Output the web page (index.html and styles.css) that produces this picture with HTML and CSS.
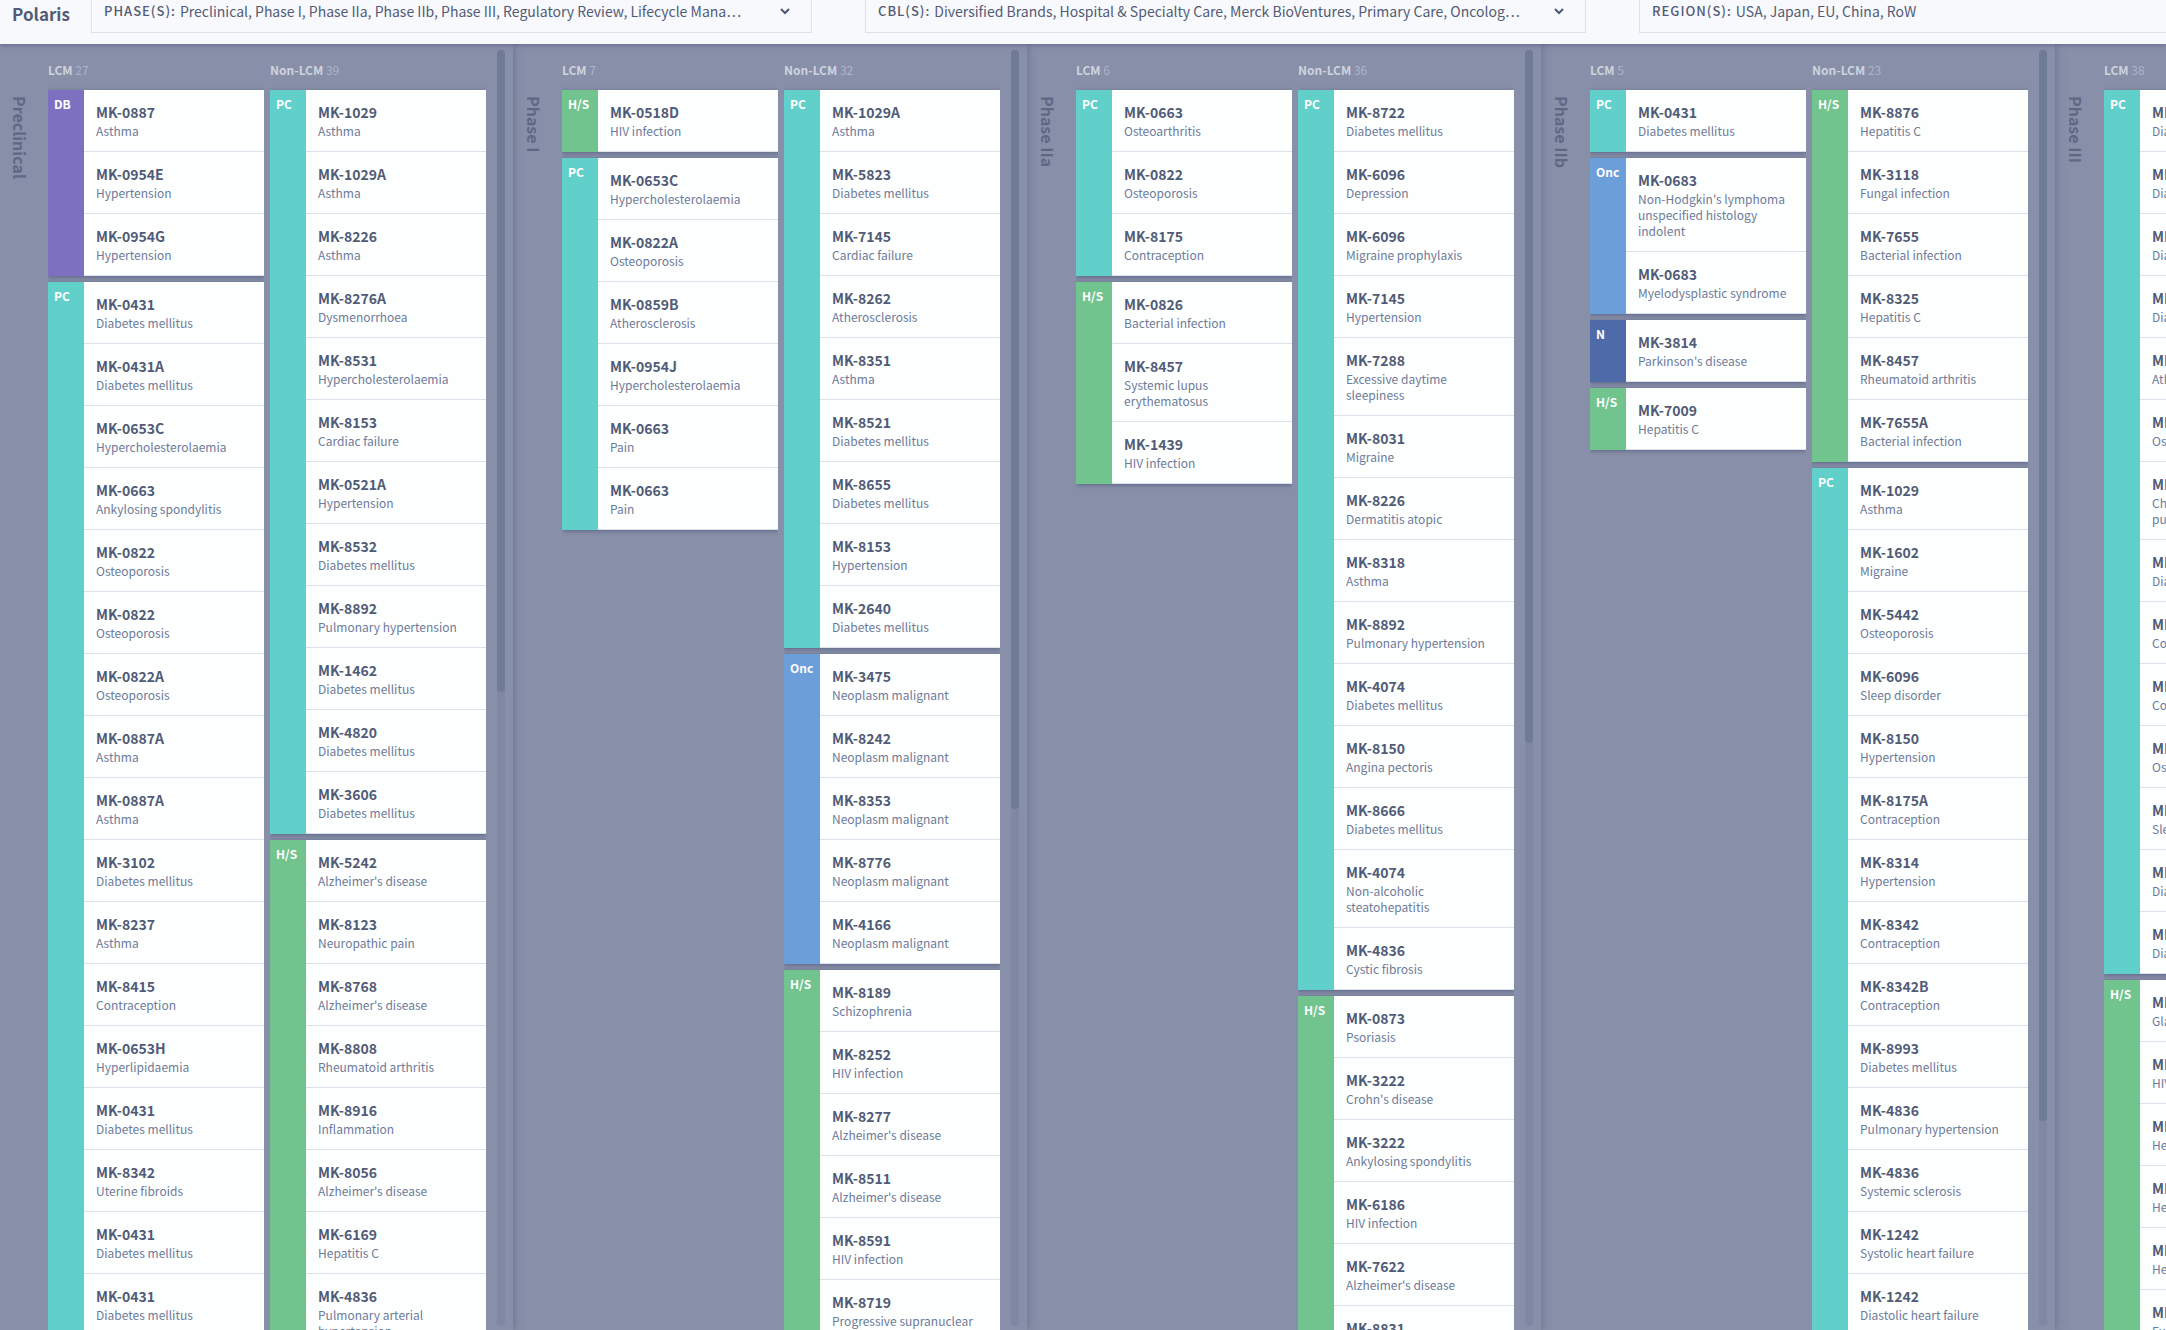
FILE: index.html
```html
<!DOCTYPE html>
<html lang="en">
<head>
<meta charset="utf-8">
<title>Polaris</title>
<link rel="stylesheet" href="styles.css">
</head>
<body>
<header class="topbar">
  <h1 class="brand">Polaris</h1>
  <div class="filters">
    <div class="filter">
      <label class="filter-label" for="phases">PHASE(S):</label>
      <select class="filter-select" id="phases"><option>Preclinical, Phase I, Phase IIa, Phase IIb, Phase III, Regulatory Review, Lifecycle Mana…</option></select>
      <svg class="chevron" viewBox="0 0 12 8" aria-hidden="true"><path d="M2 2l4 4 4-4"/></svg>
    </div>
    <div class="filter">
      <label class="filter-label" for="cbls">CBL(S):</label>
      <select class="filter-select" id="cbls"><option>Diversified Brands, Hospital &amp; Specialty Care, Merck BioVentures, Primary Care, Oncolog…</option></select>
      <svg class="chevron" viewBox="0 0 12 8" aria-hidden="true"><path d="M2 2l4 4 4-4"/></svg>
    </div>
    <div class="filter">
      <label class="filter-label" for="regions">REGION(S):</label>
      <select class="filter-select" id="regions"><option>USA, Japan, EU, China, RoW</option></select>
      <svg class="chevron" viewBox="0 0 12 8" aria-hidden="true"><path d="M2 2l4 4 4-4"/></svg>
    </div>
  </div>
</header>
<main class="board">
  <section class="phase">
    <h2 class="phase-name">Preclinical</h2>
    <div class="column">
      <h3 class="column-title">LCM <span class="count">27</span></h3>
      <div class="group db"><span class="tag">DB</span><ul class="items">
        <li><b>MK-0887</b><p>Asthma</p></li>
        <li><b>MK-0954E</b><p>Hypertension</p></li>
        <li><b>MK-0954G</b><p>Hypertension</p></li>
      </ul></div>
      <div class="group pc"><span class="tag">PC</span><ul class="items">
        <li><b>MK-0431</b><p>Diabetes mellitus</p></li>
        <li><b>MK-0431A</b><p>Diabetes mellitus</p></li>
        <li><b>MK-0653C</b><p>Hypercholesterolaemia</p></li>
        <li><b>MK-0663</b><p>Ankylosing spondylitis</p></li>
        <li><b>MK-0822</b><p>Osteoporosis</p></li>
        <li><b>MK-0822</b><p>Osteoporosis</p></li>
        <li><b>MK-0822A</b><p>Osteoporosis</p></li>
        <li><b>MK-0887A</b><p>Asthma</p></li>
        <li><b>MK-0887A</b><p>Asthma</p></li>
        <li><b>MK-3102</b><p>Diabetes mellitus</p></li>
        <li><b>MK-8237</b><p>Asthma</p></li>
        <li><b>MK-8415</b><p>Contraception</p></li>
        <li><b>MK-0653H</b><p>Hyperlipidaemia</p></li>
        <li><b>MK-0431</b><p>Diabetes mellitus</p></li>
        <li><b>MK-8342</b><p>Uterine fibroids</p></li>
        <li><b>MK-0431</b><p>Diabetes mellitus</p></li>
        <li><b>MK-0431</b><p>Diabetes mellitus</p></li>
      </ul></div>
    </div>
    <div class="column">
      <h3 class="column-title">Non-LCM <span class="count">39</span></h3>
      <div class="group pc"><span class="tag">PC</span><ul class="items">
        <li><b>MK-1029</b><p>Asthma</p></li>
        <li><b>MK-1029A</b><p>Asthma</p></li>
        <li><b>MK-8226</b><p>Asthma</p></li>
        <li><b>MK-8276A</b><p>Dysmenorrhoea</p></li>
        <li><b>MK-8531</b><p>Hypercholesterolaemia</p></li>
        <li><b>MK-8153</b><p>Cardiac failure</p></li>
        <li><b>MK-0521A</b><p>Hypertension</p></li>
        <li><b>MK-8532</b><p>Diabetes mellitus</p></li>
        <li><b>MK-8892</b><p>Pulmonary hypertension</p></li>
        <li><b>MK-1462</b><p>Diabetes mellitus</p></li>
        <li><b>MK-4820</b><p>Diabetes mellitus</p></li>
        <li><b>MK-3606</b><p>Diabetes mellitus</p></li>
      </ul></div>
      <div class="group hs"><span class="tag">H/S</span><ul class="items">
        <li><b>MK-5242</b><p>Alzheimer's disease</p></li>
        <li><b>MK-8123</b><p>Neuropathic pain</p></li>
        <li><b>MK-8768</b><p>Alzheimer's disease</p></li>
        <li><b>MK-8808</b><p>Rheumatoid arthritis</p></li>
        <li><b>MK-8916</b><p>Inflammation</p></li>
        <li><b>MK-8056</b><p>Alzheimer's disease</p></li>
        <li><b>MK-6169</b><p>Hepatitis C</p></li>
        <li><b>MK-4836</b><p>Pulmonary arterial hypertension</p></li>
      </ul></div>
    </div>
    <div class="scrollbar"><div class="thumb" style="height:50.3%"></div></div>
  </section>
  <section class="phase">
    <h2 class="phase-name">Phase I</h2>
    <div class="column">
      <h3 class="column-title">LCM <span class="count">7</span></h3>
      <div class="group hs"><span class="tag">H/S</span><ul class="items">
        <li><b>MK-0518D</b><p>HIV infection</p></li>
      </ul></div>
      <div class="group pc"><span class="tag">PC</span><ul class="items">
        <li><b>MK-0653C</b><p>Hypercholesterolaemia</p></li>
        <li><b>MK-0822A</b><p>Osteoporosis</p></li>
        <li><b>MK-0859B</b><p>Atherosclerosis</p></li>
        <li><b>MK-0954J</b><p>Hypercholesterolaemia</p></li>
        <li><b>MK-0663</b><p>Pain</p></li>
        <li><b>MK-0663</b><p>Pain</p></li>
      </ul></div>
    </div>
    <div class="column">
      <h3 class="column-title">Non-LCM <span class="count">32</span></h3>
      <div class="group pc"><span class="tag">PC</span><ul class="items">
        <li><b>MK-1029A</b><p>Asthma</p></li>
        <li><b>MK-5823</b><p>Diabetes mellitus</p></li>
        <li><b>MK-7145</b><p>Cardiac failure</p></li>
        <li><b>MK-8262</b><p>Atherosclerosis</p></li>
        <li><b>MK-8351</b><p>Asthma</p></li>
        <li><b>MK-8521</b><p>Diabetes mellitus</p></li>
        <li><b>MK-8655</b><p>Diabetes mellitus</p></li>
        <li><b>MK-8153</b><p>Hypertension</p></li>
        <li><b>MK-2640</b><p>Diabetes mellitus</p></li>
      </ul></div>
      <div class="group onc"><span class="tag">Onc</span><ul class="items">
        <li><b>MK-3475</b><p>Neoplasm malignant</p></li>
        <li><b>MK-8242</b><p>Neoplasm malignant</p></li>
        <li><b>MK-8353</b><p>Neoplasm malignant</p></li>
        <li><b>MK-8776</b><p>Neoplasm malignant</p></li>
        <li><b>MK-4166</b><p>Neoplasm malignant</p></li>
      </ul></div>
      <div class="group hs"><span class="tag">H/S</span><ul class="items">
        <li><b>MK-8189</b><p>Schizophrenia</p></li>
        <li><b>MK-8252</b><p>HIV infection</p></li>
        <li><b>MK-8277</b><p>Alzheimer's disease</p></li>
        <li><b>MK-8511</b><p>Alzheimer's disease</p></li>
        <li><b>MK-8591</b><p>HIV infection</p></li>
        <li><b>MK-8719</b><p>Progressive supranuclear palsy</p></li>
      </ul></div>
    </div>
    <div class="scrollbar"><div class="thumb" style="height:59.5%"></div></div>
  </section>
  <section class="phase">
    <h2 class="phase-name">Phase IIa</h2>
    <div class="column">
      <h3 class="column-title">LCM <span class="count">6</span></h3>
      <div class="group pc"><span class="tag">PC</span><ul class="items">
        <li><b>MK-0663</b><p>Osteoarthritis</p></li>
        <li><b>MK-0822</b><p>Osteoporosis</p></li>
        <li><b>MK-8175</b><p>Contraception</p></li>
      </ul></div>
      <div class="group hs"><span class="tag">H/S</span><ul class="items">
        <li><b>MK-0826</b><p>Bacterial infection</p></li>
        <li><b>MK-8457</b><p>Systemic lupus erythematosus</p></li>
        <li><b>MK-1439</b><p>HIV infection</p></li>
      </ul></div>
    </div>
    <div class="column">
      <h3 class="column-title">Non-LCM <span class="count">36</span></h3>
      <div class="group pc"><span class="tag">PC</span><ul class="items">
        <li><b>MK-8722</b><p>Diabetes mellitus</p></li>
        <li><b>MK-6096</b><p>Depression</p></li>
        <li><b>MK-6096</b><p>Migraine prophylaxis</p></li>
        <li><b>MK-7145</b><p>Hypertension</p></li>
        <li><b>MK-7288</b><p>Excessive daytime sleepiness</p></li>
        <li><b>MK-8031</b><p>Migraine</p></li>
        <li><b>MK-8226</b><p>Dermatitis atopic</p></li>
        <li><b>MK-8318</b><p>Asthma</p></li>
        <li><b>MK-8892</b><p>Pulmonary hypertension</p></li>
        <li><b>MK-4074</b><p>Diabetes mellitus</p></li>
        <li><b>MK-8150</b><p>Angina pectoris</p></li>
        <li><b>MK-8666</b><p>Diabetes mellitus</p></li>
        <li><b>MK-4074</b><p>Non-alcoholic steatohepatitis</p></li>
        <li><b>MK-4836</b><p>Cystic fibrosis</p></li>
      </ul></div>
      <div class="group hs"><span class="tag">H/S</span><ul class="items">
        <li><b>MK-0873</b><p>Psoriasis</p></li>
        <li><b>MK-3222</b><p>Crohn's disease</p></li>
        <li><b>MK-3222</b><p>Ankylosing spondylitis</p></li>
        <li><b>MK-6186</b><p>HIV infection</p></li>
        <li><b>MK-7622</b><p>Alzheimer's disease</p></li>
        <li><b>MK-8831</b><p>Hepatitis C</p></li>
      </ul></div>
    </div>
    <div class="scrollbar"><div class="thumb" style="height:54.3%"></div></div>
  </section>
  <section class="phase">
    <h2 class="phase-name">Phase IIb</h2>
    <div class="column">
      <h3 class="column-title">LCM <span class="count">5</span></h3>
      <div class="group pc"><span class="tag">PC</span><ul class="items">
        <li><b>MK-0431</b><p>Diabetes mellitus</p></li>
      </ul></div>
      <div class="group onc"><span class="tag">Onc</span><ul class="items">
        <li><b>MK-0683</b><p>Non-Hodgkin's lymphoma unspecified histology indolent</p></li>
        <li><b>MK-0683</b><p>Myelodysplastic syndrome</p></li>
      </ul></div>
      <div class="group neu"><span class="tag">N</span><ul class="items">
        <li><b>MK-3814</b><p>Parkinson's disease</p></li>
      </ul></div>
      <div class="group hs"><span class="tag">H/S</span><ul class="items">
        <li><b>MK-7009</b><p>Hepatitis C</p></li>
      </ul></div>
    </div>
    <div class="column">
      <h3 class="column-title">Non-LCM <span class="count">23</span></h3>
      <div class="group hs"><span class="tag">H/S</span><ul class="items">
        <li><b>MK-8876</b><p>Hepatitis C</p></li>
        <li><b>MK-3118</b><p>Fungal infection</p></li>
        <li><b>MK-7655</b><p>Bacterial infection</p></li>
        <li><b>MK-8325</b><p>Hepatitis C</p></li>
        <li><b>MK-8457</b><p>Rheumatoid arthritis</p></li>
        <li><b>MK-7655A</b><p>Bacterial infection</p></li>
      </ul></div>
      <div class="group pc"><span class="tag">PC</span><ul class="items">
        <li><b>MK-1029</b><p>Asthma</p></li>
        <li><b>MK-1602</b><p>Migraine</p></li>
        <li><b>MK-5442</b><p>Osteoporosis</p></li>
        <li><b>MK-6096</b><p>Sleep disorder</p></li>
        <li><b>MK-8150</b><p>Hypertension</p></li>
        <li><b>MK-8175A</b><p>Contraception</p></li>
        <li><b>MK-8314</b><p>Hypertension</p></li>
        <li><b>MK-8342</b><p>Contraception</p></li>
        <li><b>MK-8342B</b><p>Contraception</p></li>
        <li><b>MK-8993</b><p>Diabetes mellitus</p></li>
        <li><b>MK-4836</b><p>Pulmonary hypertension</p></li>
        <li><b>MK-4836</b><p>Systemic sclerosis</p></li>
        <li><b>MK-1242</b><p>Systolic heart failure</p></li>
        <li><b>MK-1242</b><p>Diastolic heart failure</p></li>
      </ul></div>
    </div>
    <div class="scrollbar"><div class="thumb" style="height:83.9%"></div></div>
  </section>
  <section class="phase">
    <h2 class="phase-name">Phase III</h2>
    <div class="column">
      <h3 class="column-title">LCM <span class="count">38</span></h3>
      <div class="group pc"><span class="tag">PC</span><ul class="items">
        <li><b>MK-0431</b><p>Diabetes mellitus</p></li>
        <li><b>MK-0431</b><p>Diabetes mellitus</p></li>
        <li><b>MK-0431A</b><p>Diabetes mellitus</p></li>
        <li><b>MK-0431D</b><p>Diabetes mellitus</p></li>
        <li><b>MK-0653C</b><p>Atherosclerosis</p></li>
        <li><b>MK-0822</b><p>Osteoporosis</p></li>
        <li><b>MK-0887A</b><p>Chronic obstructive pulmonary disease</p></li>
        <li><b>MK-3102</b><p>Diabetes mellitus</p></li>
        <li><b>MK-8175A</b><p>Contraception</p></li>
        <li><b>MK-8342B</b><p>Contraception</p></li>
        <li><b>MK-0822</b><p>Osteoporosis</p></li>
        <li><b>MK-4305</b><p>Sleep disorder</p></li>
        <li><b>MK-0431</b><p>Diabetes mellitus</p></li>
        <li><b>MK-0431</b><p>Diabetes mellitus</p></li>
      </ul></div>
      <div class="group hs"><span class="tag">H/S</span><ul class="items">
        <li><b>MK-0507</b><p>Glaucoma</p></li>
        <li><b>MK-0518</b><p>HIV infection</p></li>
        <li><b>MK-7009</b><p>Hepatitis C</p></li>
        <li><b>MK-7009</b><p>Hepatitis C</p></li>
        <li><b>MK-7009</b><p>Hepatitis C</p></li>
        <li><b>MK-5592</b><p>Fungal infection</p></li>
      </ul></div>
    </div>
    <div class="column"></div>
    <div class="scrollbar"></div>
  </section>
</main>
</body>
</html>
```
FILE: styles.css
```css
* { box-sizing: border-box; }

body {
  margin: 0;
  height: 100vh;
  display: flex;
  flex-direction: column;
  overflow: hidden;
  background: #888fa8;
  color: #525b76;
  font-family: "Noto Sans CJK KR", "Noto Sans", sans-serif;
}

h1, h2, h3, ul, p { margin: 0; padding: 0; }

.topbar {
  position: relative;
  z-index: 10;
  flex: none;
  display: flex;
  align-items: flex-start;
  padding: 0 0 11px 12px;
  background: #f8f9fc;
  box-shadow: 0 1px 4px rgba(70, 82, 120, .6);
}

.brand {
  flex: none;
  width: 79px;
  padding-top: 2px;
  font-size: 17px;
  line-height: 24px;
  font-weight: 700;
}

.filters {
  flex: 1;
  min-width: 0;
  display: flex;
  gap: 53px;
  overflow: hidden;
}

.filter {
  flex: none;
  width: 721px;
  height: 33px;
  display: flex;
  align-items: flex-start;
  padding: 0 20px 0 12px;
  border: 1px solid #dce1ec;
  border-top: 0;
}

.filter-label {
  font-size: 13px;
  line-height: 22px;
  font-weight: 500;
  letter-spacing: 1px;
}

.filter-select {
  flex: 1;
  min-width: 0;
  height: 22px;
  margin: 0;
  padding: 0 0 0 4px;
  border: 0;
  appearance: none;
  background: transparent;
  color: inherit;
  font-family: inherit;
  font-size: 14px;
  line-height: 22px;
}

.chevron {
  width: 12px;
  height: 8px;
  margin-top: 7px;
  fill: none;
  stroke: #4d5878;
  stroke-width: 2;
}

.board {
  flex: 1;
  min-height: 0;
  display: flex;
  gap: 1px;
  overflow: hidden;
}

.phase {
  flex: none;
  width: 513px;
  display: flex;
  gap: 6px;
  padding-right: 8px;
  box-shadow: 1px 0 8px rgba(85, 97, 132, .6);
  clip-path: inset(0 -12px 0 0);
}

.phase-name {
  width: 42px;
  padding: 52px 9px 0 0;
  writing-mode: vertical-rl;
  font-size: 16px;
  line-height: 26px;
  font-weight: 700;
  color: #5f6883;
}

.column { flex: 1; min-width: 0; overflow: hidden; }

.column-title {
  height: 46px;
  padding-top: 16px;
  font-size: 12px;
  line-height: 20px;
  font-weight: 700;
  color: #ced3df;
}

.count { font-weight: 400; color: #adb5c7; }

.group {
  display: flex;
  margin-bottom: 6px;
  background: #fdfffe;
  box-shadow: 0 1px 4px rgba(70, 82, 120, .7);
}

.tag {
  flex: none;
  width: 36px;
  padding: 4px 0 0 6px;
  font-size: 12px;
  line-height: 20px;
  font-weight: 700;
  color: #fff;
}

.pc .tag { background: #61d0cb; }
.hs .tag { background: #71c48e; }
.db .tag { background: #7e70c1; }
.onc .tag { background: #6c9eda; }
.neu .tag { background: #4e6aa8; }

.items { flex: 1; min-width: 0; list-style: none; }

.items li {
  padding: 11px 12px 12px;
  border-bottom: 1px solid #dde1ec;
}

.items b {
  display: block;
  font-size: 14px;
  line-height: 22px;
  font-weight: 700;
}

.items p {
  font-size: 12px;
  line-height: 16px;
  color: #6e7a9a;
}

.scrollbar {
  flex: none;
  width: 8px;
  margin: 6px 0 4px 5px;
  border-radius: 4px;
  background: #7f88a2;
}

.thumb { border-radius: 4px; background: #6f7a94; }
```
